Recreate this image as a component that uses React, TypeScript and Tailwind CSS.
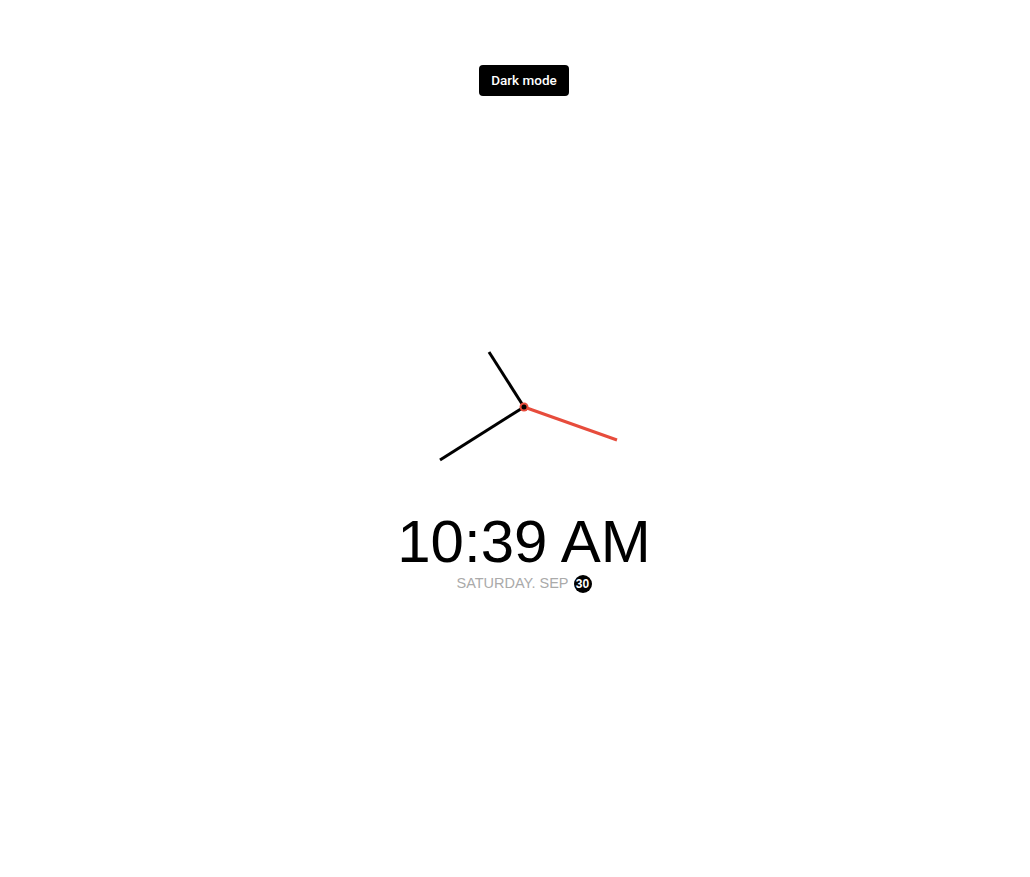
export default function App() {
  return (
    <div className="min-h-screen w-full bg-white flex flex-col items-center pl-[18px] pt-[65px] font-['Liberation_Sans',Arial,sans-serif]">
      <button className="h-[31px] w-[90px] rounded-[4px] bg-black text-white text-[13.5px] font-medium font-['Roboto',sans-serif]">
        Dark mode
      </button>

      <svg width="240" height="140" viewBox="0 0 240 140" className="mt-[241px]">
        <line x1="120" y1="70" x2="85" y2="15" stroke="#000" strokeWidth="3" />
        <line x1="120" y1="70" x2="36" y2="123" stroke="#000" strokeWidth="3" />
        <line x1="120" y1="70" x2="213" y2="103" stroke="#e74c3c" strokeWidth="3" />
        <circle cx="120" cy="70" r="4.5" fill="#e74c3c" />
        <circle cx="120" cy="70" r="2.5" fill="#000" />
      </svg>

      <div className="mt-[35px] text-[60px] leading-none text-black">10:39 AM</div>

      <div className="mt-[3px] flex h-[18px] items-center gap-[5px] text-[14.5px] uppercase text-[#aaaaaa]">
        <span>Saturday. Sep</span>
        <span className="flex h-[18px] w-[18px] items-center justify-center rounded-full bg-black text-[12px] font-bold text-white">
          30
        </span>
      </div>
    </div>
  );
}
